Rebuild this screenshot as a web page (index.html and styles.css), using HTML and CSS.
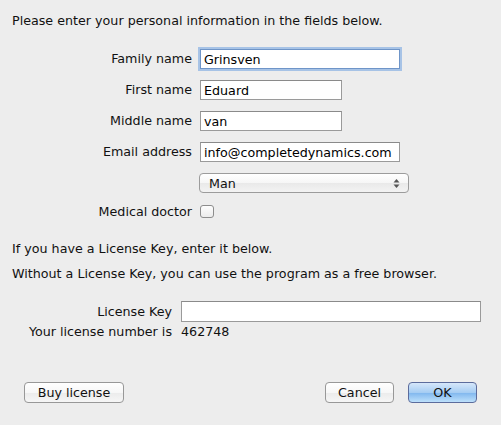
FILE: index.html
```html
<!DOCTYPE html>
<html lang="en">
<head>
    <meta charset="UTF-8">
    <meta name="viewport" content="width=device-width, initial-scale=1.0">
    <title>Personal information</title>
    <link rel="stylesheet" href="styles.css">
</head>
<body>
    <div class="dialog">
        <p class="intro">Please enter your personal information in the fields below.</p>

        <div class="person-form">
            <label class="field-label" for="familyName">Family name</label>
            <input class="text-field wide focused" type="text" id="familyName" value="Grinsven">

            <label class="field-label" for="firstName">First name</label>
            <input class="text-field" type="text" id="firstName" value="Eduard">

            <label class="field-label" for="middleName">Middle name</label>
            <input class="text-field" type="text" id="middleName" value="van">

            <label class="field-label" for="email">Email address</label>
            <input class="text-field wide" type="text" id="email" value="info@completedynamics.com">

            <span></span>
            <div class="popup">
                <span>Man</span>
                <svg class="popup-arrows" width="7" height="11" viewBox="0 0 7 11">
                    <path d="M3.5 1 L6.5 4.5 L0.5 4.5 Z" fill="#555"/>
                    <path d="M3.5 10 L6.5 6.5 L0.5 6.5 Z" fill="#555"/>
                </svg>
            </div>

            <label class="field-label short" for="doctor">Medical doctor</label>
            <div class="check-cell"><span class="checkbox" id="doctor"></span></div>
        </div>

        <p class="note">If you have a License Key, enter it below.</p>
        <p class="note">Without a License Key, you can use the program as a free browser.</p>

        <div class="license-form">
            <label class="field-label" for="licenseKey">License Key</label>
            <input class="text-field" type="text" id="licenseKey">

            <span class="field-label">Your license number is</span>
            <span class="license-number">462748</span>
        </div>

        <div class="buttons">
            <button class="btn">Buy license</button>
            <span class="spacer"></span>
            <button class="btn cancel">Cancel</button>
            <button class="btn default">OK</button>
        </div>
    </div>
</body>
</html>
```

FILE: styles.css
```css
html, body {
    margin: 0;
    height: 100%;
}
body {
    font-family: 'DejaVu Sans', 'Liberation Sans', sans-serif;
    font-size: 12.7px;
    color: #111;
    background-color: #ededed;
}
.dialog {
    padding: 12px 12px 0 12px;
}
.intro {
    margin: 0;
    line-height: 18px;
}
.person-form {
    display: grid;
    grid-template-columns: 180px auto;
    column-gap: 8px;
    row-gap: 11px;
    margin-top: 19px;
    justify-items: start;
    align-items: center;
}
.field-label {
    justify-self: end;
    line-height: 20px;
}
.field-label.short {
    line-height: 14px;
    margin-top: 1px;
}
.text-field {
    box-sizing: border-box;
    width: 142px;
    height: 20px;
    margin: 0;
    padding: 0 3px;
    border: 1px solid #9a9a9a;
    border-top-color: #8a8a8a;
    background: #fff;
    font-family: inherit;
    font-size: 12.7px;
    color: #000;
    outline: none;
}
.text-field.wide {
    width: 200px;
}
.text-field.focused {
    border-color: #6f95c8;
    box-shadow: 0 0 0 2px #a7c3e6;
}
.popup {
    box-sizing: border-box;
    width: 210px;
    height: 20px;
    margin-left: -1px;
    padding: 0 8px 0 9px;
    display: flex;
    align-items: center;
    justify-content: space-between;
    border: 1px solid #9c9c9c;
    border-radius: 4px;
    background: linear-gradient(#ffffff, #f6f6f6 50%, #e9e9e9 51%, #f3f3f3);
}
.popup-arrows {
    display: block;
}
.check-cell {
    height: 14px;
    display: flex;
    align-items: center;
}
.checkbox {
    box-sizing: border-box;
    width: 14px;
    height: 13px;
    border: 1px solid #8d8d8d;
    border-radius: 3px;
    background: linear-gradient(#fdfdfd, #ececec);
}
.note {
    margin: 0;
    line-height: 18px;
}
.person-form + .note {
    margin-top: 21px;
}
.note + .note {
    margin-top: 7px;
}
.license-form {
    display: grid;
    grid-template-columns: 160px 300px;
    column-gap: 9px;
    margin-top: 18px;
    align-items: center;
}
.license-form .text-field {
    width: 300px;
    height: 21px;
}
.license-number {
    line-height: 20px;
}
.buttons {
    display: flex;
    align-items: center;
    margin-top: 40px;
    padding: 0 12px;
}
.spacer {
    flex: 1;
}
.btn {
    box-sizing: border-box;
    height: 21px;
    padding: 0;
    width: 100px;
    border: 1px solid #989898;
    border-radius: 4px;
    background: linear-gradient(#ffffff, #f7f7f7 50%, #ebebeb 51%, #f6f6f6);
    font-family: inherit;
    font-size: 12.7px;
    color: #111;
}
.btn.cancel {
    width: 69px;
    margin-right: 14px;
}
.btn.default {
    width: 69px;
    border-color: #5c6c9c;
    background: linear-gradient(#d6e7fa, #a6cdf3 50%, #7fb6ee 51%, #bde0fb);
}
```
